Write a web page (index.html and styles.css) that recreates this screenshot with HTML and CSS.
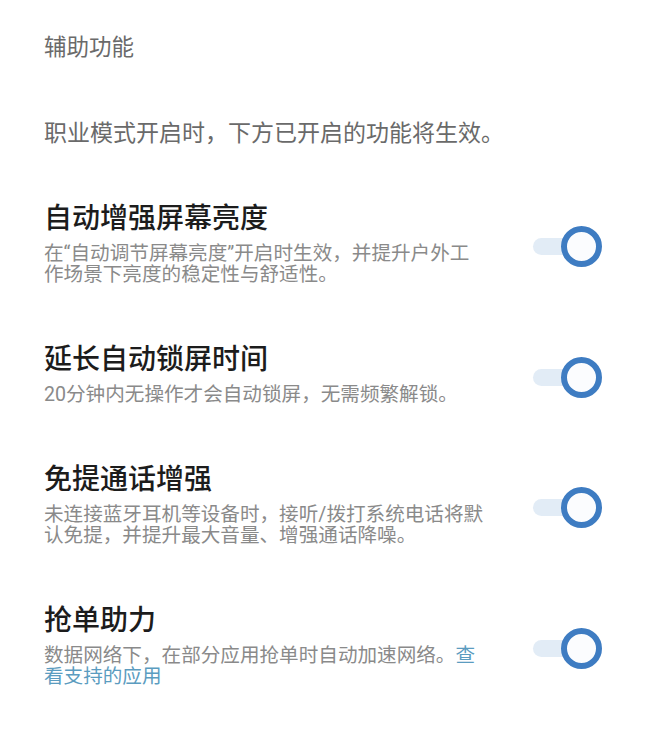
FILE: index.html
```html
<!DOCTYPE html>
<html lang="zh-CN">
<head>
  <meta charset="UTF-8">
  <meta name="viewport" content="width=device-width, initial-scale=1.0">
  <title>辅助功能</title>
  <link rel="stylesheet" href="styles.css">
</head>
<body>
  <div id="page">
    <h1 class="page-title">辅助功能</h1>
    <p class="intro">职业模式开启时，下方已开启的功能将生效。</p>

    <div class="setting-list">
      <div class="setting">
        <div class="setting-text">
          <div class="setting-title">自动增强屏幕亮度</div>
          <div class="setting-desc">在“自动调节屏幕亮度”开启时生效，并提升户外工作场景下亮度的稳定性与舒适性。</div>
        </div>
        <span class="switch on"></span>
      </div>

      <div class="setting">
        <div class="setting-text">
          <div class="setting-title">延长自动锁屏时间</div>
          <div class="setting-desc">20分钟内无操作才会自动锁屏，无需频繁解锁。</div>
        </div>
        <span class="switch on"></span>
      </div>

      <div class="setting">
        <div class="setting-text">
          <div class="setting-title">免提通话增强</div>
          <div class="setting-desc">未连接蓝牙耳机等设备时，接听/拨打系统电话将默认免提，并提升最大音量、增强通话降噪。</div>
        </div>
        <span class="switch on"></span>
      </div>

      <div class="setting">
        <div class="setting-text">
          <div class="setting-title">抢单助力</div>
          <div class="setting-desc">数据网络下，在部分应用抢单时自动加速网络。<a href="#" class="desc-link">查看支持的应用</a></div>
        </div>
        <span class="switch on"></span>
      </div>
    </div>
  </div>
</body>
</html>
```

FILE: styles.css
```css
body {
  margin: 0;
  padding: 0;
  background-color: #fff;
  font-family: Roboto, "Noto Sans CJK SC", sans-serif;
}

#page {
  padding: 32px 45px 40px 44px;
}

.page-title {
  margin: 0;
  font-size: 22.5px;
  line-height: 30px;
  font-weight: 400;
  color: #6a6a6a;
}

.intro {
  margin: 57px 0 0;
  font-size: 23px;
  line-height: 30px;
  color: #6a6a6a;
}

.setting-list {
  display: flex;
  flex-direction: column;
  gap: 58px;
  margin-top: 53px;
}

.setting {
  display: flex;
  align-items: center;
  justify-content: space-between;
}

.setting-title {
  font-size: 28px;
  line-height: 34px;
  font-weight: 500;
  color: #1c1c1c;
}

.setting-desc {
  width: 22.5em;
  margin-top: 7px;
  font-size: 19.6px;
  line-height: 21px;
  color: #8a8a8a;
}

.desc-link {
  color: #5b9cc0;
  text-decoration: none;
}

.switch {
  position: relative;
  flex-shrink: 0;
  width: 69px;
  height: 41px;
  margin-top: 6px;
}

.switch::before {
  content: "";
  position: absolute;
  left: 0;
  top: 12px;
  width: 56px;
  height: 17px;
  border-radius: 9px;
  background-color: #e2ecf6;
}

.switch::after {
  content: "";
  position: absolute;
  right: 0;
  top: 0;
  width: 29px;
  height: 29px;
  border: 6px solid #3e7cc2;
  border-radius: 50%;
  background-color: #fbfcfe;
}
```
